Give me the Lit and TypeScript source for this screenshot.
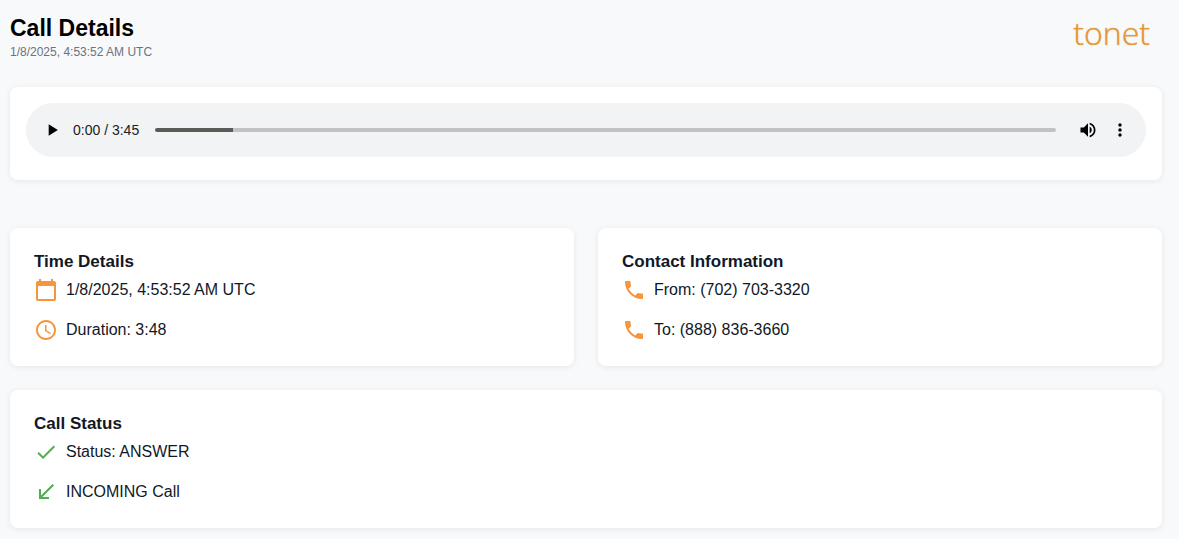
import { LitElement, html, css, svg } from "lit";
import { customElement, property, state } from "lit/decorators.js";

const ICONS: Record<string, string> = {
  calendar:
    "M20 3h-1V1h-2v2H7V1H5v2H4c-1.100 0-2 .9-2 2v16c0 1.100.9 2 2 2h16c1.100 0 2-.9 2-2V5c0-1.100-.9-2-2-2zm0 18H4V8h16v13z",
  clock:
    "M11.990 2C6.470 2 2 6.480 2 12s4.470 10 9.990 10C17.520 22 22 17.520 22 12S17.520 2 11.990 2zM12 20c-4.420 0-8-3.580-8-8s3.580-8 8-8 8 3.580 8 8-3.580 8-8 8zm.5-13H11v6l5.250 3.150.75-1.230-4.500-2.670z",
  phone:
    "M6.620 10.790c1.440 2.830 3.760 5.140 6.590 6.590l2.200-2.200c.27-.27.67-.36 1.020-.24 1.120.37 2.330.57 3.570.57.55 0 1 .45 1 1V20c0 .55-.45 1-1 1-9.390 0-17-7.610-17-17 0-.55.45-1 1-1h3.500c.55 0 1 .45 1 1 0 1.250.2 2.450.57 3.570.11.35.03.74-.25 1.020z",
  check: "M9 16.170 4.830 12l-1.420 1.410L9 19 21 7l-1.410-1.410z",
  incoming: "M20 5.410 18.590 4 7 15.590V9H5v10h10v-2H8.410z",
  play: "M8 5v14l11-7z",
  volume:
    "M3 9v6h4l5 5V4L7 9H3zm13.500 3c0-1.770-1.020-3.290-2.500-4.030v8.050c1.480-.73 2.500-2.250 2.500-4.020zM14 3.230v2.060c2.890.86 5 3.540 5 6.710s-2.110 5.850-5 6.710v2.060c4.010-.91 7-4.490 7-8.770s-2.990-7.860-7-8.770z",
  more: "M12 8c1.100 0 2-.9 2-2s-.9-2-2-2-2 .9-2 2 .9 2 2 2zm0 2c-1.100 0-2 .9-2 2s.9 2 2 2 2-.9 2-2-.9-2-2-2zm0 6c-1.100 0-2 .9-2 2s.9 2 2 2 2-.9 2-2-.9-2-2-2z",
};

const icon = (name: string) => html`
  <svg class="icon" viewBox="0 0 24 24" aria-hidden="true">
    ${svg`<path d=${ICONS[name]} fill="currentColor"></path>`}
  </svg>
`;

interface Row {
  icon: string;
  text: string;
}

@customElement("audio-bar")
export class AudioBar extends LitElement {
  @property() elapsed = "0:00";
  @property() total = "3:45";
  @state() private position = 78;

  static styles = css`
    :host {
      display: block;
    }
    .bar {
      display: flex;
      align-items: center;
      box-sizing: border-box;
      height: 54px;
      padding: 0 10px;
      border-radius: 27px;
      background: #f1f3f4;
    }
    .button {
      display: flex;
      align-items: center;
      justify-content: center;
      width: 32px;
      height: 32px;
      padding: 0;
      border: 0;
      background: none;
      color: #000;
    }
    .icon {
      width: 20px;
      height: 20px;
    }
    .time {
      margin: 0 16px 0 5px;
      font-size: 14px;
      line-height: 20px;
      color: #202124;
    }
    .seek {
      appearance: none;
      flex: 1;
      min-width: 0;
      height: 4px;
      margin: 0 16px 0 0;
      border-radius: 2px;
      overflow: hidden;
      background-color: #c1c2c3;
      background-image: linear-gradient(#5a5a58, #5a5a58);
      background-repeat: no-repeat;
    }
    .seek::-webkit-slider-thumb {
      appearance: none;
      width: 1px;
      height: 4px;
      background: transparent;
    }
  `;

  private onSeek(e: Event) {
    this.position = Number((e.target as HTMLInputElement).value);
  }

  render() {
    const fill = `${this.position / 9}%`;
    return html`
      <div class="bar">
        <button class="button" aria-label="Play">${icon("play")}</button>
        <span class="time">${this.elapsed} / ${this.total}</span>
        <input
          class="seek"
          type="range"
          aria-label="Seek"
          min="0"
          max="900"
          .value=${String(this.position)}
          style="background-size: ${fill} 100%"
          @input=${this.onSeek}
        />
        <button class="button" aria-label="Mute">${icon("volume")}</button>
        <button class="button" aria-label="More options">${icon("more")}</button>
      </div>
    `;
  }
}

@customElement("info-card")
export class InfoCard extends LitElement {
  @property() heading = "";
  @property() tone = "orange";
  @property({ attribute: false }) rows: Row[] = [];

  static styles = css`
    :host {
      display: block;
      padding: 24px;
      border-radius: 8px;
      background: #fff;
      box-shadow: 0 1px 6px rgba(0, 0, 0, 0.08);
    }
    .heading {
      margin: 0 0 6px;
      font-size: 17px;
      line-height: 20px;
      font-weight: 700;
      color: #111827;
    }
    .rows {
      display: grid;
      gap: 16px;
      margin: 0;
      padding: 0;
      list-style: none;
    }
    .row {
      display: flex;
      gap: 8px;
      font-size: 16px;
      line-height: 24px;
      color: #111827;
    }
    .icon {
      flex: none;
      width: 24px;
      height: 24px;
    }
    .orange {
      color: #f6953b;
    }
    .green {
      color: #4caf50;
    }
    .mark {
      display: flex;
    }
  `;

  render() {
    return html`
      <h2 class="heading">${this.heading}</h2>
      <ul class="rows">
        ${this.rows.map(
          (r) => html`<li class="row">
            <span class="mark ${this.tone}">${icon(r.icon)}</span>
            <span>${r.text}</span>
          </li>`
        )}
      </ul>
    `;
  }
}

@customElement("app-root")
export class AppRoot extends LitElement {
  static styles = css`
    :host {
      display: block;
      box-sizing: border-box;
      min-height: 100vh;
      padding: 16px 17px 11px 10px;
      background: #f7f9fb;
      font-family: "Liberation Sans", Arial, sans-serif;
    }
    .header {
      display: flex;
      justify-content: space-between;
      align-items: flex-start;
      margin-bottom: 27px;
    }
    .title {
      margin: 0 0 4px;
      font-size: 23px;
      line-height: 24px;
      font-weight: 700;
      color: #000;
    }
    .date {
      margin: 0;
      font-size: 12px;
      line-height: 16px;
      color: #6b7280;
    }
    .logo {
      padding-right: 12px;
      font-family: "Open Sans", "Noto Sans", sans-serif;
      font-size: 32px;
      line-height: 34px;
      font-weight: 300;
      color: #e5973a;
      text-shadow: 0 0 1px #e5973a;
    }
    .player {
      margin-bottom: 48px;
      padding: 16px 16px 23px;
      border-radius: 8px;
      background: #fff;
      box-shadow: 0 1px 6px rgba(0, 0, 0, 0.08);
    }
    .cards {
      display: grid;
      grid-template-columns: 1fr 1fr;
      gap: 24px;
    }
    .wide {
      grid-column: 1 / -1;
    }
  `;

  render() {
    return html`
      <header class="header">
        <div>
          <h1 class="title">Call Details</h1>
          <p class="date">1/8/2025, 4:53:52 AM UTC</p>
        </div>
        <div class="logo">tonet</div>
      </header>
      <section class="player"><audio-bar></audio-bar></section>
      <main class="cards">
        <info-card
          heading="Time Details"
          .rows=${[
            { icon: "calendar", text: "1/8/2025, 4:53:52 AM UTC" },
            { icon: "clock", text: "Duration: 3:48" },
          ]}
        ></info-card>
        <info-card
          heading="Contact Information"
          .rows=${[
            { icon: "phone", text: "From: (702) 703-3320" },
            { icon: "phone", text: "To: (888) 836-3660" },
          ]}
        ></info-card>
        <info-card
          class="wide"
          heading="Call Status"
          tone="green"
          .rows=${[
            { icon: "check", text: "Status: ANSWER" },
            { icon: "incoming", text: "INCOMING Call" },
          ]}
        ></info-card>
      </main>
    `;
  }
}
